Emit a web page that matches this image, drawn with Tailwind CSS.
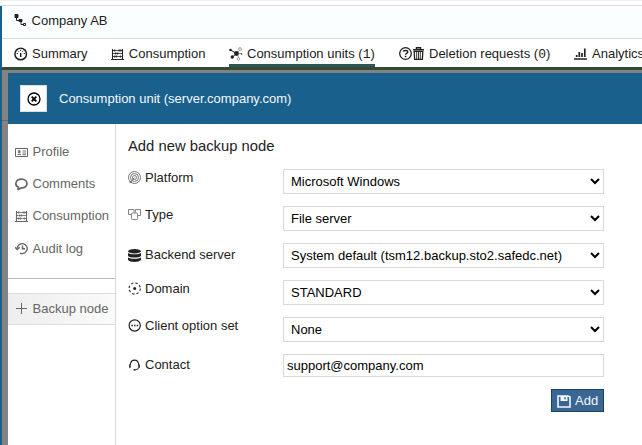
<!DOCTYPE html>
<html lang="en">
<head>
<meta charset="utf-8">
<title>Backup node</title>
<script src="https://cdn.jsdelivr.net/npm/@tailwindcss/browser@4"></script>
</head>
<body class="w-[642px] h-[445px] overflow-hidden bg-white flex flex-col font-['Liberation_Sans',Arial,sans-serif] text-[13px] leading-[15px] text-[#222]">
<svg class="hidden">
  <symbol id="abacus" viewBox="0 0 13 13"><path d="M1.500 1v11M11.500 1v11" fill="none" stroke="currentColor" stroke-width="1.100"/><path d="M0 11.500h13" stroke="currentColor" stroke-width="1"/><path d="M2 2.500h9M2 5.500h9M2 8.500h9" stroke="currentColor" stroke-width=".8"/><path d="M3.700 1.500v2M8.200 1.500v2M9.800 1.500v2M4.700 4.500v2M6.700 4.500v2M3.700 7.500v2M5.500 7.500v2M9.300 7.500v2" stroke="currentColor" stroke-width="1.200"/></symbol>
</svg>
<div class="h-[6px] shrink-0 border-t border-t-[#f0f0f0] border-b border-b-[#d9dbdc]"></div>
<div class="flex-1 min-h-0 border-l-2 border-[#1a608d] flex flex-col">
  <header class="h-[33px] shrink-0 bg-[#fafeff] border-b border-[#d9dbdc] flex items-center pl-3 pb-[4px]">
    <svg class="w-[13px] h-[13px] mr-[4.6px]" viewBox="0 0 13 13" fill="none" stroke="currentColor"><path d="M1 .5h3v3H1zM5 5.500h3v2H5z" fill="currentColor"/><path d="M2.500 4v2.500H5M7 8v2.500h2"/><path d="M9.500 9.500h2v2h-2z"/></svg>
    <span>Company AB</span>
  </header>
  <nav class="h-[28px] shrink-0 flex pl-3 whitespace-nowrap">
    <div class="flex shrink-0 items-center gap-1 w-[97px]">
      <svg class="w-[14px] h-[14px] mt-px" viewBox="0 0 14 14" fill="none" stroke="currentColor"><circle cx="6.700" cy="7" r="5.800" stroke-width="1.500"/><path d="M6.700 6v4" stroke-width="1.500"/><path d="M2.700 6.500h1.200M9.700 6.500h1.200M4.200 3.800l.7.900M9.200 3.800l-.7.900M6.700 3v1"/></svg>
      <span>Summary</span></div>
    <div class="flex shrink-0 items-center gap-1 w-[118px]"><svg class="w-[13px] h-[13px] mt-[2px]"><use href="#abacus"/></svg><span class="ml-[.8px]">Consumption</span></div>
    <div class="flex shrink-0 items-center gap-1 w-[146px] border-b-[3px] border-[#2f5656] h-[28px] mr-[23px]">
      <svg class="w-[14px] h-[14px] mt-[4px]" viewBox="0 0 14 14" fill="none" stroke="currentColor"><path d="M1.500 3l6 3.500-4 3.500"/><path d="M7.500 6.500L10 3.500M8 6.500h5M8 7l2 4" stroke="#888" stroke-width=".8"/><circle cx="11" cy="2" r="1.400" stroke="#888" stroke-width=".8"/><circle cx="9.500" cy="12" r="1.300" stroke="#888" stroke-width=".8"/><g fill="currentColor" stroke="none"><circle cx="7.500" cy="6.500" r="2.400"/><circle cx="1.500" cy="3" r="1.300"/><circle cx="3.300" cy="10" r="1.700"/><circle cx="12.500" cy="7" r=".7"/></g></svg>
      <span class="mt-[4px]">Consumption units (<span class="font-['Liberation_Mono',monospace]">1</span>)</span></div>
    <div class="flex shrink-0 items-center w-[176px]">
      <svg class="w-[13px] h-[13px] mt-[1px] ml-[.5px]" viewBox="0 0 13 13" fill="none" stroke="currentColor"><circle cx="6.500" cy="6.500" r="5.800" stroke-width="1.300"/><path d="M4.300 4.500c.6-1.300 4.500-1.400 4.500.5 0 1.500-2.200 1.300-2.200 2.700M6.600 8.700v1.500" stroke-width="1.500"/></svg>
      <svg class="w-[13px] h-[13px] mr-1 mt-px" viewBox="0 0 13 13" fill="none" stroke="currentColor"><path d="M1 2.700h11M4.500 2V.8h4V2" stroke-width="1.500"/><path d="M2.200 4.300h8.600l-.4 8H2.600z" stroke-width="1.300"/><path d="M4.700 5v7M6.500 5v7M8.300 5v7" stroke-width=".9"/></svg>
      <span class="ml-[.5px] mt-[2px]">Deletion requests (<span class="font-['Liberation_Mono',monospace]">0</span>)</span></div>
    <div class="flex shrink-0 items-center gap-1">
      <svg class="w-[13px] h-[13px] mt-px" viewBox="0 0 13 13" stroke="currentColor" fill="none"><path d="M0 12h13" stroke-width="1.500"/><path d="M2.700 10V8M5.300 10V5M8 10V6M10.800 10V1.500" stroke-width="1.700"/></svg>
      <span class="ml-[1px]">Analytics</span></div>
  </nav>
  <div class="h-[3px] shrink-0 bg-[#344a35]"></div>
  <main class="flex-1 min-h-0 bg-[#838383] flex">
    <div class="w-[6px] shrink-0 pt-[50px]"><div class="h-px bg-[#6c6c6c]"></div></div>
    <section class="flex-1 min-w-0 mt-[3px] bg-white flex flex-col">
      <div class="h-[51px] shrink-0 bg-[#1a608d] text-[#f4f8fb] flex items-center pl-3 gap-3">
        <button class="w-[27px] h-[27px] bg-white border border-[#ddd] text-black flex items-center justify-center"><svg class="w-[14px] h-[14px]" viewBox="0 0 14 14" fill="none" stroke="currentColor"><circle cx="7" cy="7" r="6" stroke-width="1.300"/><path d="M4.700 4.700l4.600 4.600M9.300 4.700l-4.600 4.600" stroke-width="1.900"/></svg></button>
        <span>Consumption unit (server.company.com)</span>
      </div>
      <div class="flex-1 min-h-0 flex">
        <aside class="w-[108px] shrink-0 border-r border-[#d9d9d9] text-[#666] pt-[11px] whitespace-nowrap">
          <div class="h-8 flex items-center pl-[7px] gap-1"><svg class="w-[13px] h-[13px] mt-[2px]" viewBox="0 0 13 13" fill="none" stroke="currentColor"><path d="M.5 2.500h12v8H.5z"/><path d="M2.500 8.500h3.500M7.500 5h3.500M7.500 7h3.500M7.500 8.700h3.500" stroke-width=".9"/><path d="M3.300 4.500h1.800v2.500H3.300z" fill="currentColor" stroke-width=".5"/></svg><span class="ml-[.5px]">Profile</span></div>
          <div class="h-8 flex items-center pl-[7px] gap-1"><svg class="w-[13px] h-[13px] mt-[2px]" viewBox="0 0 13 13" fill="none" stroke="currentColor" stroke-width="1.700"><path d="M3.500 9.300C-.7 7.500.2 1.300 6.500 1.200c7.300 0 7.400 8.700 0 8.700L2.500 11.700c.9-.9 1.100-1.600 1-2.400z"/></svg><span class="ml-[.5px]">Comments</span></div>
          <div class="h-8 flex items-center pl-[7px] gap-1"><svg class="w-[13px] h-[13px] mt-[2px]"><use href="#abacus"/></svg><span class="ml-[.5px]">Consumption</span></div>
          <div class="h-[34px] flex items-center pl-[7px] gap-1"><svg class="w-[13px] h-[13px]" viewBox="0 0 13 13" fill="none" stroke="currentColor" stroke-width="1.400"><path d="M2.200 6.500A5 5 0 1 1 5 11.100M7.500 3.500v3.300h2.500"/><path d="M0 5.200l2.200 2.300 2.500-2.300"/></svg><span class="ml-[.5px]">Audit log</span></div>
          <div class="h-[14px] border-b border-[#bbb]"></div>
          <div class="mt-[14px] h-8 border-y border-[#ddd] bg-linear-to-r from-[#eeeeee] to-[#fafafa] flex items-center pl-[7px] pb-px gap-1"><svg class="w-[13px] h-[13px]" viewBox="0 0 13 13" stroke="currentColor"><path d="M6.500 1v11M1 6.500h11"/></svg><span class="ml-[.5px]">Backup node</span></div>
        </aside>
        <form class="w-[488px] pl-3 pt-[13px]">
          <h1 class="text-[14.8px] leading-[18px] h-8">Add new backup node</h1>
          <div class="grid grid-cols-[155px_321px] auto-rows-[37px]">
            <label class="flex gap-1 pt-[1px]"><svg class="w-[13px] h-[13px] mt-px" viewBox="0 0 13 13" fill="none" stroke="#555" stroke-width=".8"><circle cx="6.500" cy="6.500" r="6"/><circle cx="6.500" cy="6.500" r="4"/><circle cx="6.500" cy="6.500" r="2"/><path d="M6.500 6.500L2 12M1 11h2.500"/></svg><span>Platform</span></label>
            <select class="h-[25px] border border-[#d9d9d9] bg-white text-black px-[3px] py-0"><option>Microsoft Windows</option></select>
            <label class="flex gap-1 pt-[1px]"><svg class="w-[13px] h-[13px] mt-px" viewBox="0 0 13 13" fill="none" stroke="#777" stroke-width=".9"><path d="M3.500 6.500H.5V1.500h5.500v3M9.500 7.500h3v-6H7.500v3"/><rect x="3.500" y="5" width="6" height="6.500" rx="1"/></svg><span>Type</span></label>
            <select class="h-[25px] border border-[#d9d9d9] bg-white text-black px-[3px] py-0"><option>File server</option></select>
            <label class="flex gap-1 pt-[4px]"><svg class="w-[13px] h-[14px] mt-[2px]" viewBox="0 0 13 14" fill="currentColor"><ellipse cx="6.500" cy="2.200" rx="6.500" ry="2.200"/><path d="M0 4c2 1.800 11 1.800 13 0v3c-2 2-11 2-13 0zM0 8.500c2 1.800 11 1.800 13 0v2.600c-2 2.500-11 2.500-13 0z"/></svg><span>Backend server</span></label>
            <select class="h-[25px] border border-[#d9d9d9] bg-white text-black px-[3px] py-0"><option>System default (tsm12.backup.sto2.safedc.net)</option></select>
            <label class="flex gap-1 pt-[1px]"><svg class="w-[13px] h-[13px] mt-px" viewBox="0 0 13 13" fill="none" stroke="currentColor"><circle cx="6.700" cy="6.500" r="5.600" stroke-width="1.100" stroke-dasharray="2.400 2"/><circle cx="6.700" cy="6.500" r="1.500" fill="currentColor" stroke="none"/></svg><span>Domain</span></label>
            <select class="h-[25px] border border-[#d9d9d9] bg-white text-black px-[3px] py-0"><option>STANDARD</option></select>
            <label class="flex gap-1 pt-[1px]"><svg class="w-[13px] h-[13px] mt-px" viewBox="0 0 13 13" fill="none" stroke="currentColor"><circle cx="6.700" cy="6.500" r="5.600" stroke-width="1.200"/><path d="M3.300 6.500h1.500M6 6.500h1.500M8.700 6.500h1.500" stroke-width="1.600"/></svg><span>Client option set</span></label>
            <select class="h-[25px] border border-[#d9d9d9] bg-white text-black px-[3px] py-0"><option>None</option></select>
            <label class="flex gap-1 pt-[3px]"><svg class="w-[13px] h-[13px] mt-[2px]" viewBox="0 0 13 13" fill="none" stroke="currentColor"><path d="M2.300 6C2.800-.5 10.200-.5 10.700 6M10.800 8.500c-.3 1.500-1.300 2-3.300 2.300" stroke-width="1.100"/><path d="M1.900 5.500v3.300M11.100 5.500v3.300M5.700 10.700h2" stroke-width="1.600"/></svg><span>Contact</span></label>
            <input class="h-[23px] border border-[#d9d9d9] bg-white text-black px-[3px]" value="support@company.com">
          </div>
          <div class="flex justify-end -mt-[2px]">
            <button type="button" class="w-[53px] h-[23px] bg-[#3a6694] border border-[#1f3f5e] text-[#f4f8fb] flex items-center pl-[5px] gap-1"><svg class="w-[14px] h-[13px] mt-[2px]" viewBox="0 0 14 13" fill="none" stroke="currentColor"><path d="M1 1h10l2 1v10H1z" stroke-width="1.600"/><path d="M3.500 1h7v5h-7z" fill="currentColor" stroke="none"/><path d="M8 2v2.500" stroke="#3a6694" stroke-width="1.300"/></svg><span>Add</span></button>
          </div>
        </form>
      </div>
    </section>
  </main>
</div>
</body>
</html>
